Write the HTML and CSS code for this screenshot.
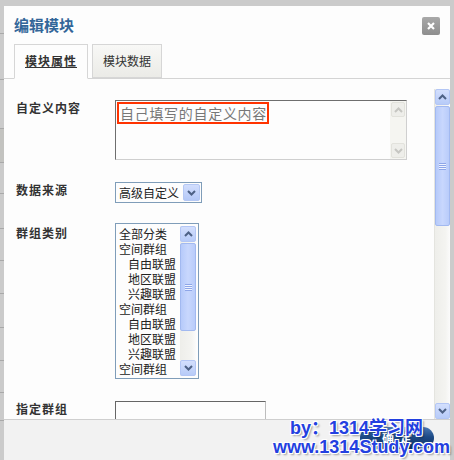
FILE: index.html
```html
<!DOCTYPE html>
<html lang="zh-CN">
<head>
    <meta charset="UTF-8">
    <title>编辑模块</title>
    <link rel="stylesheet" href="styles.css">
</head>
<body>
    <!-- 背后页面的边缘 -->
    <div class="edge">
        <span></span><span></span><span></span><span></span><span></span><span></span>
        <span></span><span></span><span></span><span></span><span></span><span></span>
    </div>

    <div class="dialog">
        <div class="dlg-head">
            <h1 class="dlg-title">编辑模块</h1>
            <a class="dlg-close" href="#">
                <svg width="10" height="10" viewBox="0 0 10 10"><path d="M2 2L8 8M8 2L2 8" stroke="#fff" stroke-width="2.2"/></svg>
            </a>
        </div>

        <div class="tabs">
            <a class="tab active" href="#">模块属性</a>
            <a class="tab" href="#">模块数据</a>
        </div>

        <div class="dlg-body">
            <div class="form">
                <div class="row">
                    <label class="label">自定义内容</label>
                    <div class="textarea">
                        <div class="textarea-text"><span class="mark">自己填写的自定义内容</span></div>
                        <div class="ta-scroll">
                            <span class="ta-btn"><svg width="9" height="6" viewBox="0 0 9 6"><path d="M1 5L4.5 1.5L8 5" fill="none" stroke="#c6c6c2" stroke-width="2"/></svg></span>
                            <span class="ta-btn"><svg width="9" height="6" viewBox="0 0 9 6"><path d="M1 1L4.5 4.5L8 1" fill="none" stroke="#c6c6c2" stroke-width="2"/></svg></span>
                        </div>
                    </div>
                </div>

                <div class="row">
                    <label class="label">数据来源</label>
                    <div class="select">
                        <span>高级自定义</span>
                        <span class="sel-btn"><svg width="9" height="6" viewBox="0 0 9 6"><path d="M1 1L4.5 4.5L8 1" fill="none" stroke="#4d6185" stroke-width="2"/></svg></span>
                    </div>
                </div>

                <div class="row row-list">
                    <label class="label label-list">群组类别</label>
                    <div class="listbox">
                        <ul class="options">
                            <li>全部分类</li>
                            <li>空间群组</li>
                            <li class="sub">自由联盟</li>
                            <li class="sub">地区联盟</li>
                            <li class="sub">兴趣联盟</li>
                            <li>空间群组</li>
                            <li class="sub">自由联盟</li>
                            <li class="sub">地区联盟</li>
                            <li class="sub">兴趣联盟</li>
                            <li>空间群组</li>
                        </ul>
                        <div class="sb sb-small">
                            <span class="sb-btn"><svg width="9" height="6" viewBox="0 0 9 6"><path d="M1 5L4.5 1.5L8 5" fill="none" stroke="#4d6185" stroke-width="2"/></svg></span>
                            <span class="sb-thumb list-thumb"><i class="grip"></i></span>
                            <span class="sb-fill"></span>
                            <span class="sb-btn"><svg width="9" height="6" viewBox="0 0 9 6"><path d="M1 1L4.5 4.5L8 1" fill="none" stroke="#4d6185" stroke-width="2"/></svg></span>
                        </div>
                    </div>
                </div>

                <div class="row">
                    <label class="label">指定群组</label>
                    <div class="input"></div>
                </div>
            </div>

            <div class="sb sb-page">
                <span class="sb-btn"><svg width="9" height="6" viewBox="0 0 9 6"><path d="M1 5L4.5 1.5L8 5" fill="none" stroke="#4d6185" stroke-width="2"/></svg></span>
                <span class="sb-thumb page-thumb"><i class="grip"></i></span>
                <span class="sb-fill"></span>
                <span class="sb-btn"><svg width="9" height="6" viewBox="0 0 9 6"><path d="M1 1L4.5 4.5L8 1" fill="none" stroke="#4d6185" stroke-width="2"/></svg></span>
            </div>
        </div>

        <div class="dlg-foot">
            <a class="btn-ok" href="#">确定</a>
            <div class="wm wm-1">by：1314学习网</div>
            <div class="wm wm-2">www.1314Study.com</div>
        </div>
    </div>
</body>
</html>
```

FILE: styles.css
```css
* {
    box-sizing: border-box;
}

body {
    margin: 0;
    width: 454px;
    height: 460px;
    overflow: hidden;
    display: flex;
    background-color: #cbcbcb;
    font-family: "Noto Sans CJK SC", sans-serif;
    font-size: 12px;
    color: #333;
}

a {
    color: inherit;
    text-decoration: none;
}

/* Edge of the page behind the dialog */
.edge {
    width: 4px;
    flex: none;
    display: flex;
    flex-direction: column;
}

.edge span {
    display: block;
    flex: none;
    border-bottom: 1px solid #a9a9a9;
}

.edge span:nth-child(1) { height: 34px; }
.edge span:nth-child(2) { height: 46px; }
.edge span:nth-child(3) { height: 49px; }
.edge span:nth-child(4) { height: 34px; background-color: #c3c3c0; }
.edge span:nth-child(5) { height: 31px; }
.edge span:nth-child(6) { height: 35px; }
.edge span:nth-child(7) { height: 32px; }
.edge span:nth-child(8) { height: 33px; }
.edge span:nth-child(9) { height: 34px; }
.edge span:nth-child(10) { height: 33px; }
.edge span:nth-child(11) { height: 32px; }
.edge span:nth-child(12) { height: 28px; }

/* Dialog */
.dialog {
    width: 446px;
    height: 454px;
    margin-top: 6px;
    background-color: #fdfdfd;
    display: flex;
    flex-direction: column;
}

.dlg-head {
    height: 38px;
    flex: none;
    display: flex;
    align-items: center;
    justify-content: space-between;
    padding: 0 10px;
}

.dlg-title {
    margin: 0;
    font-size: 15px;
    line-height: 18px;
    font-weight: bold;
    color: #336699;
}

.dlg-close {
    width: 18px;
    height: 18px;
    margin-top: 2px;
    border-radius: 2px;
    background: linear-gradient(#a9a9a9, #8e8e8e);
    display: flex;
    align-items: center;
    justify-content: center;
}

/* Tabs */
.tabs {
    height: 35px;
    flex: none;
    display: flex;
    align-items: flex-end;
    gap: 4px;
    padding-left: 10px;
    border-bottom: 1px solid #d4d4d4;
}

.tab {
    height: 34px;
    line-height: 32px;
    padding: 0 10px;
    border: 1px solid #d6d6d6;
    background: linear-gradient(#f8f8f6, #ebebe7);
    color: #333;
}

.tab.active {
    height: 35px;
    margin-bottom: -1px;
    border-bottom-color: #fdfdfd;
    background: #fdfdfd;
    font-weight: bold;
    letter-spacing: 1px;
    text-decoration: underline;
}

/* Body */
.dlg-body {
    flex: 1;
    min-height: 0;
    display: flex;
    padding-top: 10px;
}

.form {
    flex: 1;
    overflow: hidden;
    padding: 11px 0 0 12px;
}

.row {
    display: flex;
    align-items: flex-start;
}

.row + .row {
    margin-top: 22px;
}

.row.row-list {
    margin-top: 20px;
}

.label {
    width: 99px;
    flex: none;
    font-weight: bold;
    letter-spacing: 1px;
    line-height: 16px;
    color: #333;
}

.label-list {
    padding-top: 2px;
}

/* Textarea */
.textarea {
    width: 292px;
    height: 60px;
    display: flex;
    border: 1px solid #cfcfcf;
    border-top-color: #6e6e6e;
    border-left-color: #6e6e6e;
}

.textarea-text {
    flex: 1;
    padding: 1px 0 0 1px;
}

.mark {
    display: inline-block;
    width: 152px;
    height: 22px;
    padding-left: 1px;
    border: 2px solid #ff3300;
    font-size: 14px;
    line-height: 18px;
    letter-spacing: 0.7px;
    color: #777;
    white-space: nowrap;
}

.ta-scroll {
    width: 16px;
    display: flex;
    flex-direction: column;
    justify-content: space-between;
    padding: 1px;
    background-color: #f5f5f1;
}

.ta-btn {
    height: 15px;
    display: flex;
    align-items: center;
    justify-content: center;
    border: 1px solid #e2e2dc;
    border-radius: 2px;
    background-color: #eeeeea;
}

/* Select */
.select {
    width: 87px;
    height: 21px;
    display: flex;
    align-items: center;
    padding: 0 1px 0 3px;
    border: 1px solid #7f9db9;
    line-height: 17px;
    color: #222;
}

.sel-btn {
    width: 17px;
    height: 17px;
    margin-left: auto;
    display: flex;
    align-items: center;
    justify-content: center;
    border: 1px solid #b5c8f4;
    border-radius: 2px;
    background: linear-gradient(#d2defd, #b4c8f7);
}

/* Listbox */
.listbox {
    width: 84px;
    height: 156px;
    display: flex;
    padding: 2px 2px 2px 3px;
    border: 1px solid #7f9db9;
}

.options {
    flex: 1;
    margin: 0;
    padding: 0;
    list-style: none;
    overflow: hidden;
}

.options li {
    height: 15px;
    line-height: 15px;
    color: #222;
    white-space: nowrap;
}

.options li.sub {
    padding-left: 9px;
}

/* Scrollbars (XP style) */
.sb {
    width: 16px;
    flex: none;
    display: flex;
    flex-direction: column;
    background: linear-gradient(to right, #eeeeea, #f4f4f1 70%, #fbfbfb);
}

.sb-small {
    height: 150px;
}

.sb-page {
    border-left: 1px solid #e4e4df;
}

.sb-btn {
    height: 16px;
    flex: none;
    display: flex;
    align-items: center;
    justify-content: center;
    border: 1px solid #b3c6f5;
    border-radius: 2px;
    background: linear-gradient(#d3dffd, #b7cbf8);
}

.sb-thumb {
    flex: none;
    margin-top: 1px;
    display: flex;
    align-items: center;
    justify-content: center;
    border: 1px solid #a2b9f0;
    border-radius: 2px;
    background: linear-gradient(to right, #b6cafa, #c8d7fd 50%, #b9ccfa);
}

.list-thumb {
    height: 88px;
}

.page-thumb {
    height: 120px;
}

.grip {
    display: block;
    width: 7px;
    height: 7px;
    background: repeating-linear-gradient(#8ea6e8 0 1px, #eef3ff 1px 2px);
}

.sb-fill {
    flex: 1;
}

/* Input */
.input {
    width: 151px;
    height: 22px;
    border: 1px solid #bdbdbd;
    border-top-color: #666;
    border-left-color: #666;
}

/* Footer */
.dlg-foot {
    height: 41px;
    flex: none;
    position: relative;
    display: flex;
    justify-content: flex-end;
    align-items: flex-start;
    padding: 7px 16px 0 0;
    border-top: 1px solid #cfcfcf;
    background-color: #f2f2f2;
}

.btn-ok {
    width: 74px;
    height: 22px;
    border-radius: 11px;
    background: linear-gradient(#4a79b4, #1d4a86 45%, #0c2f62);
    color: #fff;
    font-weight: bold;
    line-height: 22px;
    text-align: center;
    letter-spacing: 6px;
    text-indent: 6px;
}

/* Watermark on top of the footer */
.wm {
    position: absolute;
    font-family: "Liberation Sans", "Noto Sans CJK SC", sans-serif;
    font-size: 18px;
    font-weight: bold;
    line-height: 19px;
    color: #2340e0;
    white-space: nowrap;
    text-shadow: 1px 1px 0 #fff, -1px -1px 0 #fff, 1px -1px 0 #fff, -1px 1px 0 #fff, 2px 2px 2px rgba(0, 0, 0, 0.35);
}

.wm-1 {
    left: 286px;
    top: -1px;
}

.wm-2 {
    left: 269px;
    top: 18px;
}
```
